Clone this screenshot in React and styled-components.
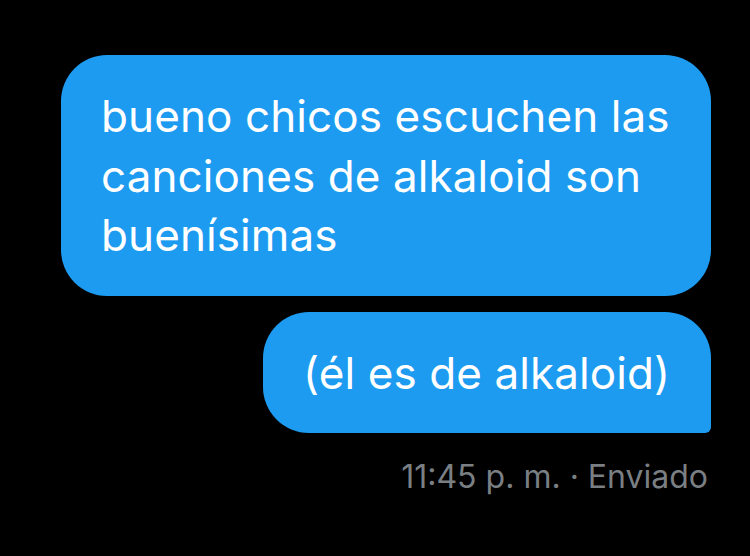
import React from "react";
import styled, { createGlobalStyle } from "styled-components";

const Global = createGlobalStyle`
  html, body { margin: 0; padding: 0; background: #000; }
  body { font-family: Inter, "Noto Sans", sans-serif; }
`;

const Page = styled.div`
  width: 750px;
  height: 556px;
  background: #000;
  display: flex;
  flex-direction: column;
  align-items: flex-end;
  padding: 55px 39px 0 0;
  box-sizing: border-box;
`;

const Bubble = styled.div`
  background: #1d9bf0;
  color: #fff;
  font-size: 44px;
  line-height: 59.5px;
  letter-spacing: 0.1px;
  box-sizing: border-box;
  width: ${(p) => (p.$width ? `${p.$width}px` : "auto")};
  padding: 32px 30px 30px 40px;
  border-radius: ${(p) => (p.$last ? "46px 46px 6px 46px" : "46px")};
  margin-bottom: ${(p) => (p.$last ? 0 : 16)}px;
`;

const Meta = styled.div`
  margin-top: 26px;
  margin-right: 3px;
  color: #7a7f84;
  font-size: 32px;
  line-height: 36px;
  letter-spacing: 0px;
`;

export default function App() {
  return (
    <>
      <Global />
      <Page>
        <Bubble $width={650}>
          bueno chicos escuchen las canciones de alkaloid son buenísimas
        </Bubble>
        <Bubble $width={448} $last>
          (él es de alkaloid)
        </Bubble>
        <Meta>11:45 p. m. · Enviado</Meta>
      </Page>
    </>
  );
}
